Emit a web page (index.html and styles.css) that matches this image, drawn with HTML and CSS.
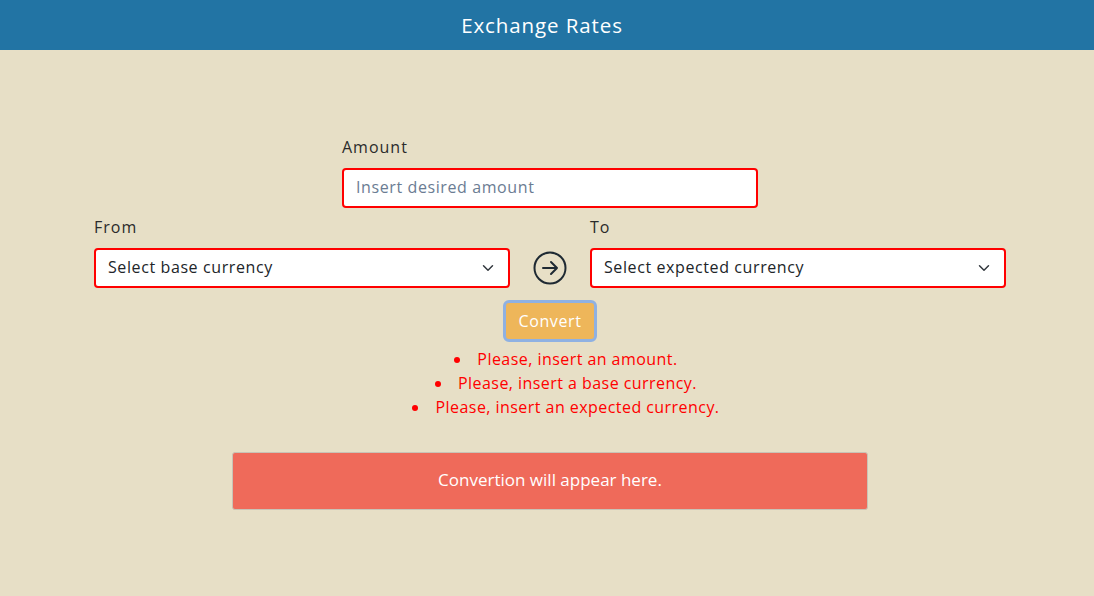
FILE: index.html
```html
<!DOCTYPE html>
<html lang="en">
<head>
<meta charset="utf-8">
<title>Exchange Rates</title>
<link rel="stylesheet" href="styles.css">
</head>
<body>
<header class="topbar"><h1 class="title">Exchange Rates</h1></header>
<main class="content">
  <div class="amount-group">
    <label class="label" for="amount">Amount</label>
    <input id="amount" class="field field-invalid" type="text" placeholder="Insert desired amount">
  </div>
  <div class="currency-row">
    <div class="currency-group">
      <label class="label" for="from">From</label>
      <select id="from" class="field select field-invalid"><option>Select base currency</option></select>
    </div>
    <div class="swap-icon">
      <svg width="34" height="34" viewBox="0 0 34 34" fill="none" stroke="#1f2a33" stroke-width="2" stroke-linecap="round" stroke-linejoin="round">
        <circle cx="17" cy="17" r="15.5"/>
        <path d="M10 17h14M18 11l6 6-6 6"/>
      </svg>
    </div>
    <div class="currency-group">
      <label class="label" for="to">To</label>
      <select id="to" class="field select field-invalid"><option>Select expected currency</option></select>
    </div>
  </div>
  <button class="convert-btn" type="button">Convert</button>
  <ul class="errors">
    <li>Please, insert an amount.</li>
    <li>Please, insert a base currency.</li>
    <li>Please, insert an expected currency.</li>
  </ul>
  <div class="result">Convertion will appear here.</div>
</main>
</body>
</html>
```
FILE: styles.css
```css
* { box-sizing: border-box; }
html, body { margin: 0; padding: 0; }
body {
  background: #e7dfc6;
  font-family: "Open Sans", "Liberation Sans", sans-serif;
  color: #212529;
  min-height: 596px;
}
.topbar {
  height: 50px;
  background: #2274a4;
  display: flex;
  align-items: center;
  justify-content: center;
  padding-right: 10px;
}
.title {
  margin: 0;
  font-weight: 400;
  font-size: 20.5px;
  color: #fff;
  letter-spacing: 0.9px;
}
.content {
  width: 912px;
  margin-left: calc(50% - 453px);
  padding-top: 85px;
  display: flex;
  flex-direction: column;
  align-items: center;
}
.amount-group { width: 416px; display: flex; flex-direction: column; }
.label {
  font-size: 16px;
  line-height: 24px;
  margin-bottom: 9px;
  color: #2b2b2b;
  letter-spacing: 1px;
}
.field {
  width: 100%;
  height: 40px;
  background: #fff;
  border: 2px solid #ff0000;
  border-radius: 4px;
  padding: 0 12px 2px;
  font-family: inherit;
  font-size: 16px;
  letter-spacing: 0.6px;
  color: #212529;
  outline: none;
}
.field::placeholder { color: #6b7c93; }
.select {
  appearance: none;
  -webkit-appearance: none;
  background-image: url("data:image/svg+xml,%3Csvg xmlns='http://www.w3.org/2000/svg' width='16' height='16' viewBox='0 0 16 16'%3E%3Cpath d='M2 5l6 6 6-6' fill='none' stroke='%23343a40' stroke-width='2' stroke-linecap='round' stroke-linejoin='round'/%3E%3C/svg%3E");
  background-repeat: no-repeat;
  background-position: right 14px center;
  background-size: 12px 12px;
}
.currency-row {
  width: 912px;
  margin-top: 7px;
  display: flex;
  align-items: flex-end;
}
.currency-group { width: 416px; display: flex; flex-direction: column; }
.swap-icon {
  flex: 1;
  height: 40px;
  display: flex;
  align-items: center;
  justify-content: center;
}
.convert-btn {
  margin-top: 12px;
  width: 94px;
  height: 42px;
  background: #eeb65a;
  border: 3px solid #8fb1e2;
  border-radius: 6px;
  color: #fff;
  font-family: inherit;
  font-size: 16px;
  letter-spacing: 0.6px;
  padding: 0;
}
.errors {
  margin: 5px 0 0;
  padding: 0 0 0 32px;
  list-style-position: inside;
  text-align: center;
  color: #ff0000;
  font-size: 16px;
  line-height: 24px;
  letter-spacing: 0.45px;
}
.result {
  margin-top: 33px;
  width: 636px;
  height: 58px;
  background: #ef6a5a;
  border: 1px solid #c9c3b6;
  border-radius: 3px;
  padding-bottom: 3px;
  display: flex;
  align-items: center;
  justify-content: center;
  color: #fff;
  font-size: 17px;
}
```
